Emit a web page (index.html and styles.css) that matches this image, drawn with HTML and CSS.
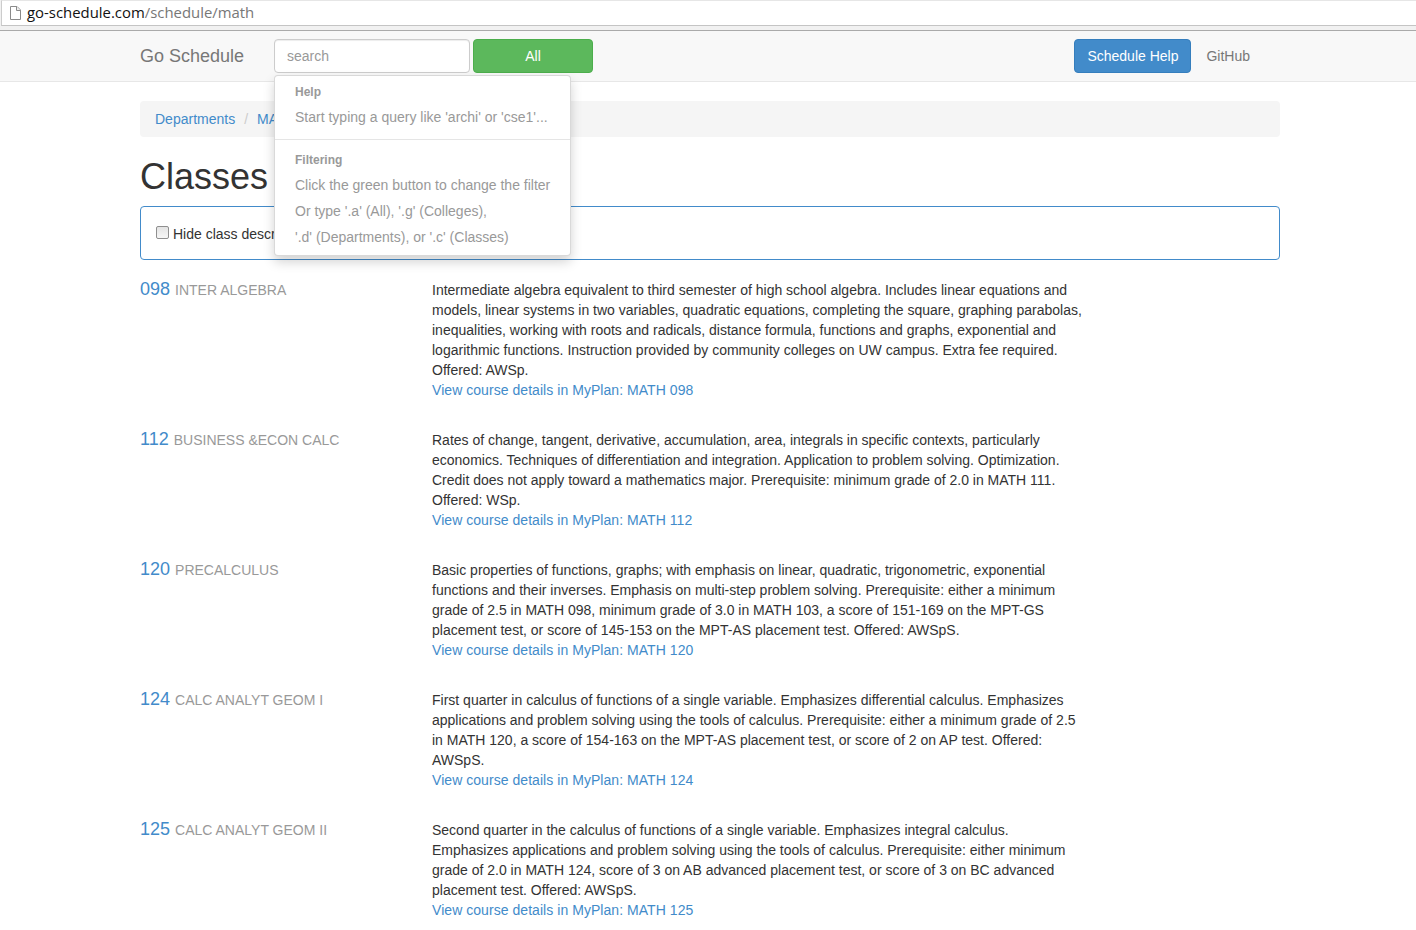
FILE: index.html
```html
<!DOCTYPE html>
<html lang="en">
<head>
<meta charset="utf-8">
<title>Go Schedule</title>
<link rel="stylesheet" href="styles.css">
</head>
<body>
<div class="chrome">
  <div class="omnibox">
    <svg class="page-icon" width="14" height="16" viewBox="0 0 14 16"><path d="M2.5 1.5H9L12.5 5V14.5H2.5Z" fill="#fff" stroke="#8a8a8a"/><path d="M8.5 1.5V5.5H12.5" fill="#eee" stroke="#8a8a8a"/></svg>
    <span class="url"><span class="host">go-schedule.com</span>/schedule/math</span>
  </div>
</div>
<nav class="navbar">
  <div class="nav-inner">
    <a class="brand">Go Schedule</a>
    <div class="search">
      <input class="search-input" type="text" placeholder="search">
      <div class="dropdown">
        <div class="dd-head">Help</div>
        <div class="dd-item">Start typing a query like 'archi' or 'cse1'...</div>
        <div class="dd-divider"></div>
        <div class="dd-head">Filtering</div>
        <div class="dd-item">Click the green button to change the filter</div>
        <div class="dd-item">Or type '.a' (All), '.g' (Colleges),</div>
        <div class="dd-item">'.d' (Departments), or '.c' (Classes)</div>
      </div>
    </div>
    <button class="btn btn-all">All</button>
    <div class="nav-right">
      <button class="btn btn-help">Schedule Help</button>
      <a class="github">GitHub</a>
    </div>
  </div>
</nav>
<main class="container">
  <ol class="breadcrumb">
    <li><a>Departments</a></li>
    <li class="sep">/</li>
    <li><a>MATH</a></li>
  </ol>
  <h1 class="title">Classes</h1>
  <div class="panel"><label class="hide-label"><input type="checkbox" class="check">Hide class descriptions</label></div>

  <section class="course">
    <h4 class="course-name"><a>098</a> <small>INTER ALGEBRA</small></h4>
    <div class="course-desc">Intermediate algebra equivalent to third semester of high school algebra. Includes linear equations and<br>models, linear systems in two variables, quadratic equations, completing the square, graphing parabolas,<br>inequalities, working with roots and radicals, distance formula, functions and graphs, exponential and<br>logarithmic functions. Instruction provided by community colleges on UW campus. Extra fee required.<br>Offered: AWSp.<br><a>View course details in MyPlan: MATH 098</a></div>
  </section>
  <section class="course">
    <h4 class="course-name"><a>112</a> <small>BUSINESS &amp;ECON CALC</small></h4>
    <div class="course-desc">Rates of change, tangent, derivative, accumulation, area, integrals in specific contexts, particularly<br>economics. Techniques of differentiation and integration. Application to problem solving. Optimization.<br>Credit does not apply toward a mathematics major. Prerequisite: minimum grade of 2.0 in MATH 111.<br>Offered: WSp.<br><a>View course details in MyPlan: MATH 112</a></div>
  </section>
  <section class="course">
    <h4 class="course-name"><a>120</a> <small>PRECALCULUS</small></h4>
    <div class="course-desc">Basic properties of functions, graphs; with emphasis on linear, quadratic, trigonometric, exponential<br>functions and their inverses. Emphasis on multi-step problem solving. Prerequisite: either a minimum<br>grade of 2.5 in MATH 098, minimum grade of 3.0 in MATH 103, a score of 151-169 on the MPT-GS<br>placement test, or score of 145-153 on the MPT-AS placement test. Offered: AWSpS.<br><a>View course details in MyPlan: MATH 120</a></div>
  </section>
  <section class="course">
    <h4 class="course-name"><a>124</a> <small>CALC ANALYT GEOM I</small></h4>
    <div class="course-desc">First quarter in calculus of functions of a single variable. Emphasizes differential calculus. Emphasizes<br>applications and problem solving using the tools of calculus. Prerequisite: either a minimum grade of 2.5<br>in MATH 120, a score of 154-163 on the MPT-AS placement test, or score of 2 on AP test. Offered:<br>AWSpS.<br><a>View course details in MyPlan: MATH 124</a></div>
  </section>
  <section class="course">
    <h4 class="course-name"><a>125</a> <small>CALC ANALYT GEOM II</small></h4>
    <div class="course-desc">Second quarter in the calculus of functions of a single variable. Emphasizes integral calculus.<br>Emphasizes applications and problem solving using the tools of calculus. Prerequisite: either minimum<br>grade of 2.0 in MATH 124, score of 3 on AB advanced placement test, or score of 3 on BC advanced<br>placement test. Offered: AWSpS.<br><a>View course details in MyPlan: MATH 125</a></div>
  </section>
</main>
</body>
</html>
```
FILE: styles.css
```css
* { box-sizing: border-box; }
html, body { height: 930px; overflow: hidden; }
body {
  margin: 0;
  background: #fff;
  color: #333;
  font-family: "Liberation Sans", Arial, sans-serif;
  font-size: 14px;
  line-height: 20px;
}
a { color: #428bca; text-decoration: none; }

.chrome {
  height: 31px;
  background: #f1f1f1;
  border-bottom: 1px solid #aaa;
}
.omnibox {
  height: 26px;
  margin-left: 1px;
  padding-left: 6px;
  display: flex;
  align-items: center;
  gap: 5px;
  background: #fff;
  border-top: 1px solid #e6e6e6;
  border-left: 1px solid #ccc;
  border-bottom: 1px solid #c4c4c4;
}
.page-icon { flex: none; margin-top: -1px; }
.url {
  font-family: "Open Sans", sans-serif;
  font-size: 14.9px;
  line-height: 22px;
  color: #777;
  margin-top: -3px;
}
.host { color: #111; }

.navbar {
  height: 51px;
  background: #f8f8f8;
  border-bottom: 1px solid #e7e7e7;
}
.nav-inner {
  width: 1140px;
  margin-left: 140px;
  height: 50px;
  display: flex;
  align-items: center;
  padding-right: 30px;
}
.brand { width: 134px; font-size: 18px; color: #777; }
.search { position: relative; width: 196px; margin-right: 3px; }
.search-input {
  display: block;
  width: 100%;
  height: 34px;
  padding: 6px 12px;
  font: inherit;
  color: #555;
  background: #fff;
  border: 1px solid #ccc;
  border-radius: 4px;
  box-shadow: inset 0 1px 1px rgba(0,0,0,.075);
}
.search-input::placeholder { color: #999; opacity: 1; }
.btn {
  height: 34px;
  padding: 6px 12px;
  font: inherit;
  color: #fff;
  border: 1px solid transparent;
  border-radius: 4px;
  white-space: nowrap;
}
.btn-all { width: 120px; background: #5cb85c; border-color: #4cae4c; }
.nav-right { margin-left: auto; display: flex; align-items: center; }
.btn-help { width: 117px; background: #428bca; border-color: #357ebd; }
.github { color: #777; margin-left: 15px; }

.dropdown {
  position: absolute;
  z-index: 10;
  top: 36px;
  left: 0;
  width: 297px;
  height: 181px;
  padding: 5px 0;
  background: #fff;
  border: 1px solid rgba(0,0,0,.15);
  border-radius: 4px;
  box-shadow: 0 6px 12px rgba(0,0,0,.175);
  color: #999;
}
.dd-head {
  padding: 3px 20px;
  font-size: 12px;
  font-weight: 700;
  line-height: 17px;
  height: 23px;
}
.dd-item { padding: 3px 20px; height: 26px; line-height: 20px; white-space: nowrap; }
.dd-divider { height: 1px; margin: 9px 0; background: #e5e5e5; }

.container { width: 1140px; margin-left: 140px; padding-top: 19px; }
.breadcrumb {
  list-style: none;
  display: flex;
  gap: 9px;
  height: 36px;
  margin: 0 0 20px;
  padding: 8px 15px;
  background: #f5f5f5;
  border-radius: 4px;
}
.sep { color: #ccc; }
.title {
  margin: 0 0 9px;
  height: 40px;
  font-size: 36px;
  font-weight: 500;
  line-height: 40px;
  color: #333;
}
.panel {
  height: 54px;
  margin-bottom: 20px;
  padding: 17px 15px;
  border: 1px solid #428bca;
  border-radius: 4px;
}
.hide-label { display: flex; align-items: center; }
.check {
  appearance: none;
  width: 13px;
  height: 13px;
  margin: -3px 4px 0 0;
  flex: none;
  border: 1px solid #8f8f8f;
  border-radius: 2px;
  background: linear-gradient(#e4e4e4, #f6f6f6);
}

.course { display: flex; padding-bottom: 30px; }
.course-name {
  width: 292px;
  flex: none;
  margin: -1px 0 0;
  font-size: 18px;
  font-weight: 500;
  line-height: 20px;
}
.course-name small { font-size: 14px; color: #999; font-weight: 400; }
.course-desc { width: 660px; white-space: nowrap; }
.course-desc a { letter-spacing: .05px; }
```
